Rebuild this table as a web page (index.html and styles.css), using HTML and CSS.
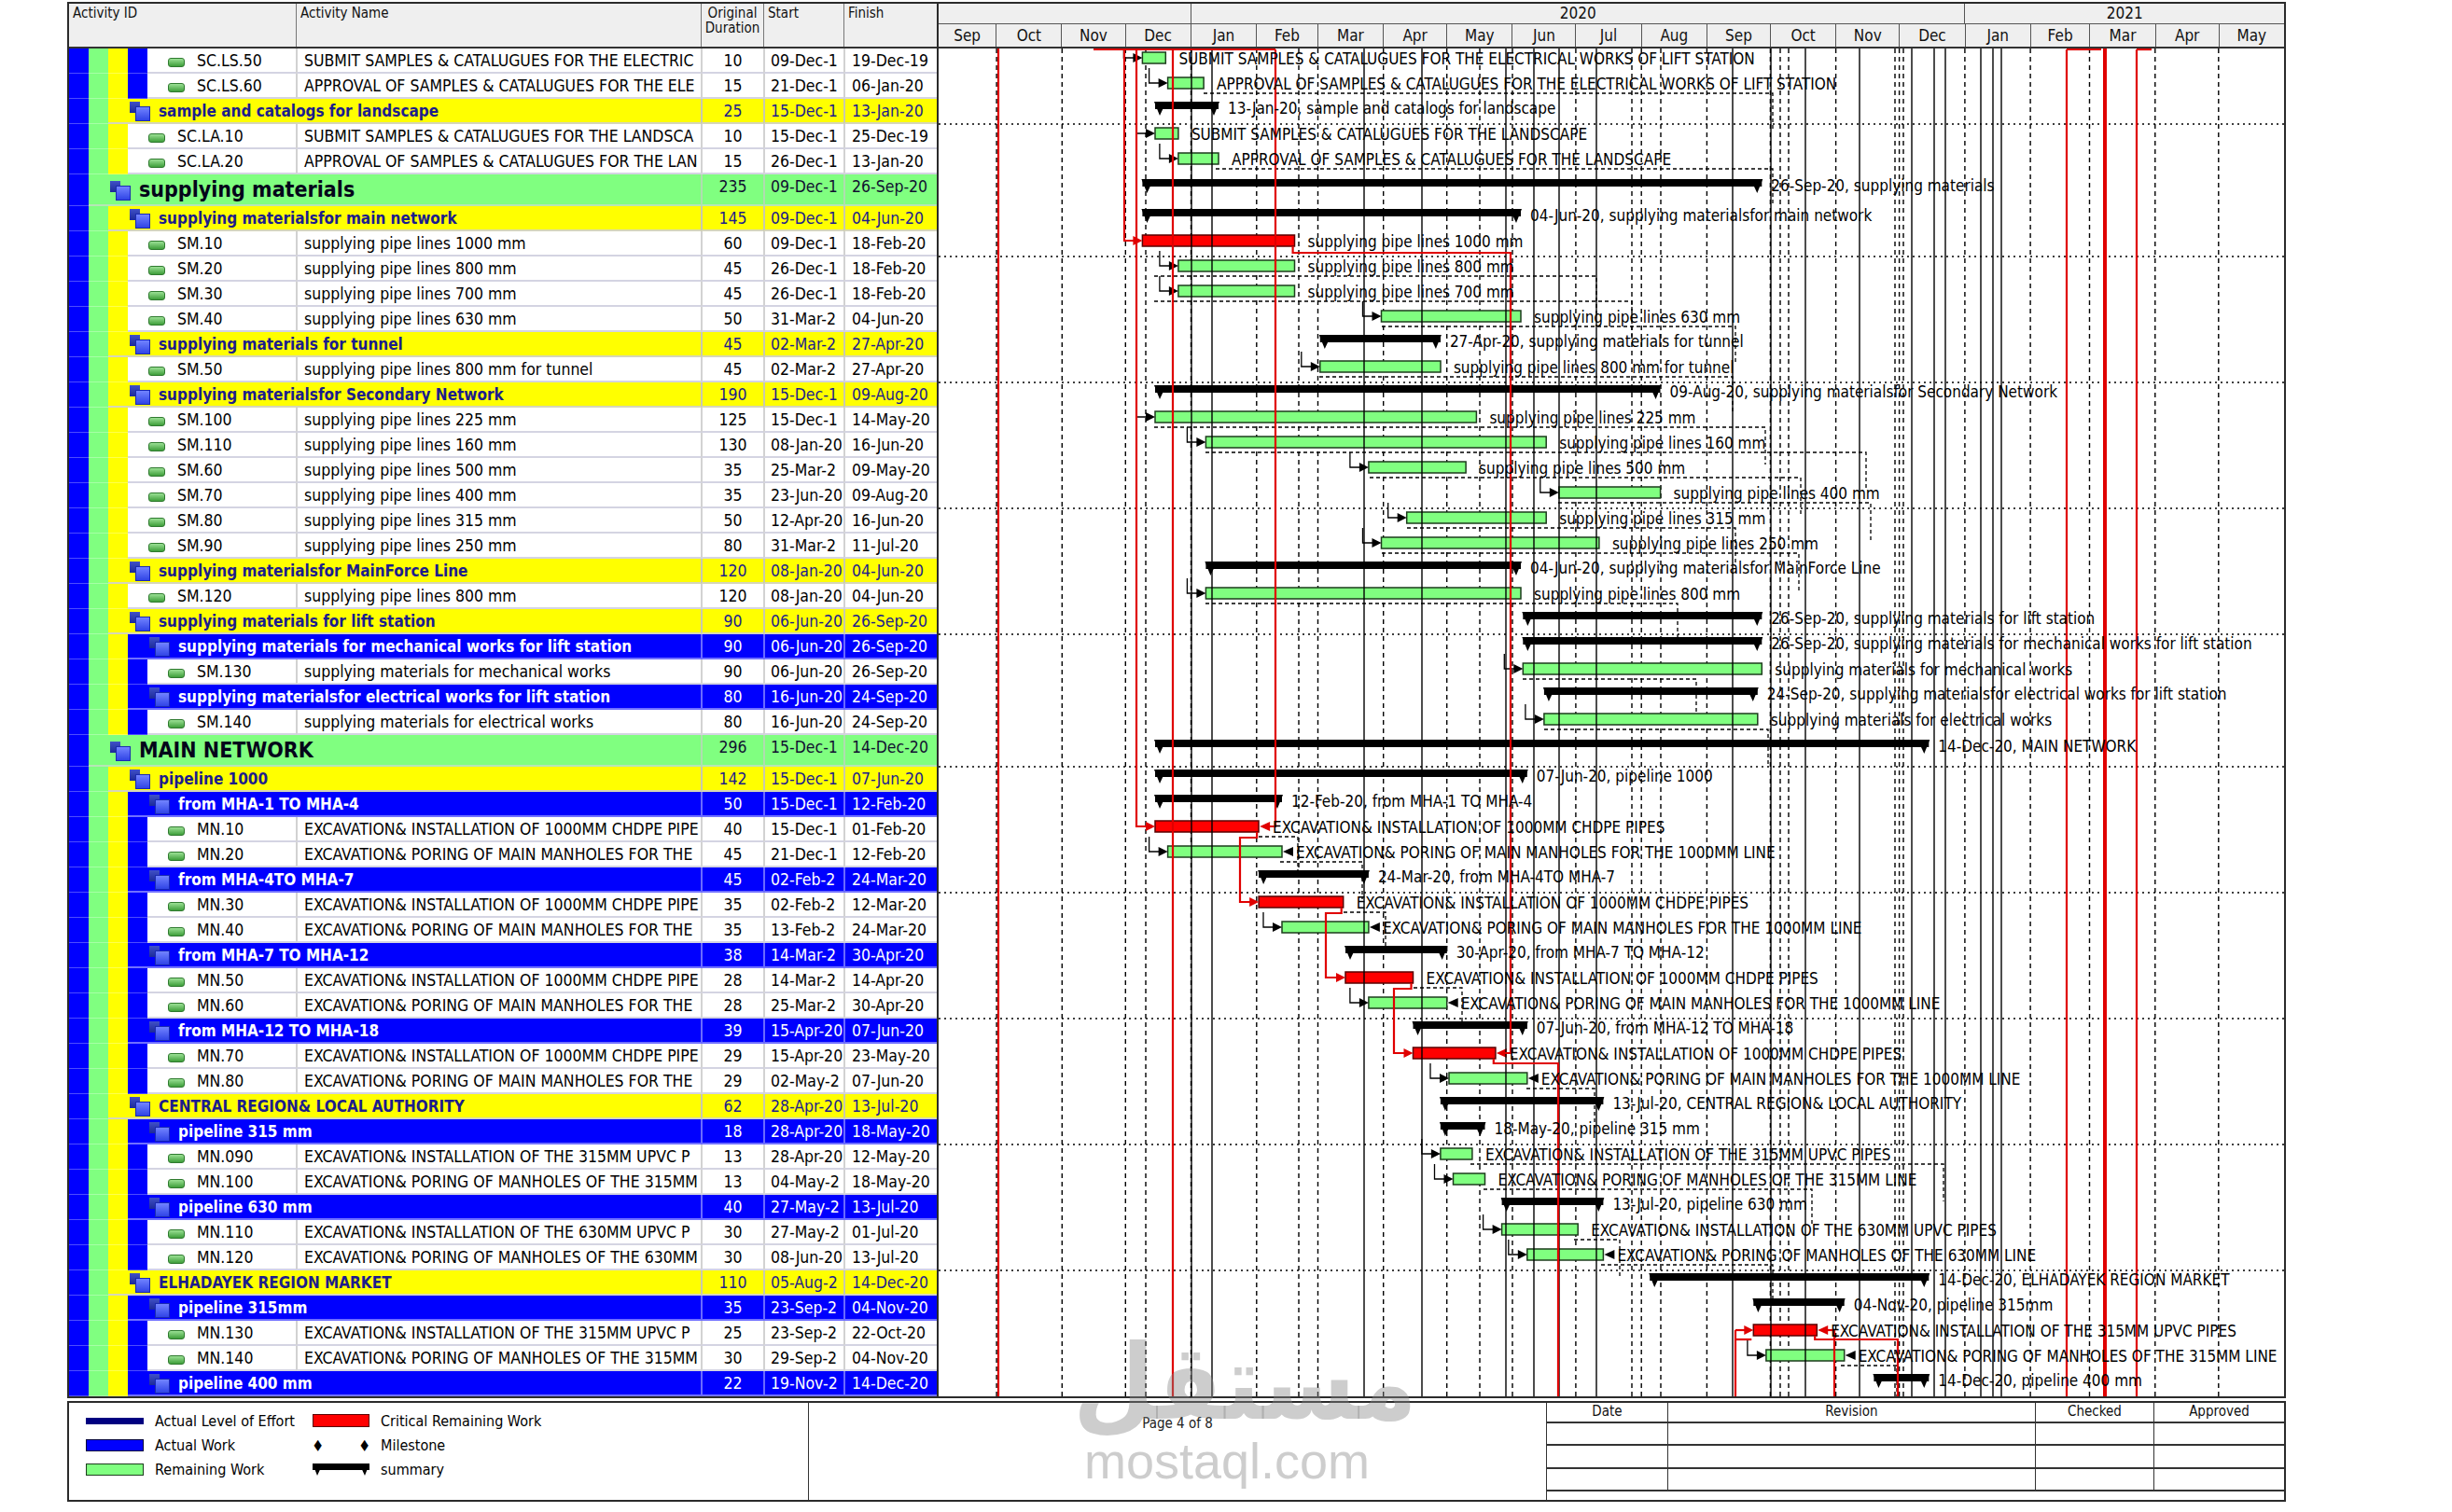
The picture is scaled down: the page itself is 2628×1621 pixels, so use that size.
FILE: index.html
```html
<!DOCTYPE html>
<html>
<head>
<meta charset="utf-8">
<title>Schedule - Page 4 of 8</title>
<link rel="stylesheet" href="styles.css">
</head>
<body>
<div class="sheet">
  <div class="chart">
    <div class="table">
      <div class="thead">
        <div class="th th-id">Activity ID</div>
        <div class="th th-name">Activity Name</div>
        <div class="th th-dur">Original<br>Duration</div>
        <div class="th th-start">Start</div>
        <div class="th th-fin">Finish</div>
      </div>
      <div class="tbody" id="tbody"></div>
    </div>
    <div class="gantt">
      <div class="ghead">
        <div class="years">
          <div class="yr" style="flex-grow:119.4"></div>
          <div class="yr" style="flex-grow:366">2020</div>
          <div class="yr" style="flex-grow:151">2021</div>
        </div>
        <div class="months">
          <div class="mo" style="flex-grow:27.4">Sep</div>
          <div class="mo" style="flex-grow:31">Oct</div>
          <div class="mo" style="flex-grow:30">Nov</div>
          <div class="mo" style="flex-grow:31">Dec</div>
          <div class="mo" style="flex-grow:31">Jan</div>
          <div class="mo" style="flex-grow:29">Feb</div>
          <div class="mo" style="flex-grow:31">Mar</div>
          <div class="mo" style="flex-grow:30">Apr</div>
          <div class="mo" style="flex-grow:31">May</div>
          <div class="mo" style="flex-grow:30">Jun</div>
          <div class="mo" style="flex-grow:31">Jul</div>
          <div class="mo" style="flex-grow:31">Aug</div>
          <div class="mo" style="flex-grow:30">Sep</div>
          <div class="mo" style="flex-grow:31">Oct</div>
          <div class="mo" style="flex-grow:30">Nov</div>
          <div class="mo" style="flex-grow:31">Dec</div>
          <div class="mo" style="flex-grow:31">Jan</div>
          <div class="mo" style="flex-grow:28">Feb</div>
          <div class="mo" style="flex-grow:31">Mar</div>
          <div class="mo" style="flex-grow:30">Apr</div>
          <div class="mo" style="flex-grow:31">May</div>
        </div>
      </div>
      <div class="gbody" id="gbody"><svg class="gsvg" id="gsvg" xmlns="http://www.w3.org/2000/svg"></svg></div>
    </div>
  </div>

  <div class="legend">
    <div class="lg-keys">
      <div class="key"><span class="sw sw-loe"></span><span class="kt">Actual Level of Effort</span></div>
      <div class="key"><span class="sw sw-crit"></span><span class="kt">Critical Remaining Work</span></div>
      <div class="key"><span class="sw sw-act"></span><span class="kt">Actual Work</span></div>
      <div class="key"><span class="sw sw-ms"><span class="dia">&#9670;</span><span class="dia">&#9670;</span></span><span class="kt">Milestone</span></div>
      <div class="key"><span class="sw sw-rem"></span><span class="kt">Remaining Work</span></div>
      <div class="key"><span class="sw sw-sum"><svg width="61" height="16" viewBox="0 0 61 16"><rect x="0" y="2" width="61" height="7" fill="#000"/><polygon points="0,2 11,2 5,15" fill="#000"/><polygon points="50,2 61,2 56,15" fill="#000"/></svg></span><span class="kt">summary</span></div>
    </div>
    <div class="lg-page">Page 4 of 8</div>
    <div class="lg-rev">
      <div class="rv rh">Date</div><div class="rv rh">Revision</div><div class="rv rh">Checked</div><div class="rv rh">Approved</div>
      <div class="rv"></div><div class="rv"></div><div class="rv"></div><div class="rv"></div>
      <div class="rv"></div><div class="rv"></div><div class="rv"></div><div class="rv"></div>
      <div class="rv"></div><div class="rv"></div><div class="rv"></div><div class="rv"></div>
      <div class="rv rlast"></div>
    </div>
  </div>
</div>

<div class="watermark">
  <div class="wm-ar">مستقل</div>
  <div class="wm-en">mostaql.com</div>
</div>

<script src="script.js"></script>
</body>
</html>
```

FILE: styles.css
```css
* { box-sizing: border-box; }
html, body { margin: 0; padding: 0; background: #fff; }
body {
  width: 2628px;
  height: 1621px;
  overflow: hidden;
  position: relative;
  font-family: "Liberation Sans Narrow", "Arial Narrow", "DejaVu Sans Condensed", "Liberation Sans", sans-serif;
  font-stretch: condensed;
  color: #000;
}

.sheet { margin-left: 72px; padding-top: 2px; width: 2378px; }

.chart { display: flex; border: 2px solid #2b2b2b; }

/* ---------- table ---------- */
.table { width: 932px; flex: none; border-right: 2px solid #2b2b2b; }
.thead { display: flex; height: 48px; background: #efefef; border-bottom: 2px solid #333; }
.th { font-size: 15px; line-height: 16px; padding: 2px 4px; border-left: 1.5px solid #777; color: #111; }
.th-id { width: 243px; border-left: none; }
.th-name { width: 434px; }
.th-dur { width: 67px; text-align: center; padding: 2px 0; }
.th-start { width: 86px; }
.th-fin { width: 100px; }

.row { display: flex; height: 27px; }
.row.r-g { height: 34px; }
.stripe { flex: none; width: 21px; border-bottom: 1px solid rgba(255,255,255,0.3); }
.s-b { background: #0000fe; }
.s-g { background: #80ff80; }
.s-y { background: #ffff00; }

.cell {
  display: flex; align-items: center; white-space: nowrap; overflow: hidden;
  font-size: 17.5px; border-bottom: 2px solid #d4d4e2;
}
.c-id { flex: 1 1 0; min-width: 0; padding-left: 22px; }
.c-wbs { flex: 1 1 0; min-width: 0; padding-left: 23px; font-weight: bold; font-size: 17px; }
.c-name { flex: none; width: 434px; padding-left: 7px; border-left: 2px solid #d2d2d2; }
.c-dur { flex: none; width: 67px; justify-content: center; border-left: 2px solid #d2d2d2; }
.c-start { flex: none; width: 86px; padding-left: 6px; border-left: 2px solid #d2d2d2; }
.c-fin { flex: none; width: 100px; padding-left: 7px; border-left: 2px solid #d2d2d2; }

.r-a .cell { background: #fff; color: #000; }
.r-y .cell { background: #ffff00; color: #1c1c8c; border-bottom-color: #d6d6b8; }
.r-y .cell.c-dur, .r-y .cell.c-start, .r-y .cell.c-fin { border-left-color: #c8c8b0; }
.r-b .cell { background: #0000fe; color: #fff; border-bottom-color: #7070ff; }
.r-b .cell.c-dur, .r-b .cell.c-start, .r-b .cell.c-fin { border-left-color: #6a6aff; }
.r-g .cell { background: #80ff80; color: #101030; border-bottom-color: #b6e6b6; }
.r-g .cell.c-dur, .r-g .cell.c-start, .r-g .cell.c-fin { border-left-color: #b0dcb0; align-items: flex-start; padding-top: 3px; }
.r-g .c-wbs { font-size: 23px; color: #05051a; }

.act-icon {
  flex: none; width: 18px; height: 10px; margin: 4px 13px 0 0;
  border-radius: 3px; border: 1px solid #2f7a2f;
  background: linear-gradient(#9ae094, #3e9e3a);
}
.wbs-icon { flex: none; position: relative; width: 21px; height: 19px; margin-right: 10px; }
.wbs-icon::before {
  content: ""; position: absolute; left: 0; top: 0; width: 11px; height: 12px;
  background: linear-gradient(#4050c8, #1c2a98);
}
.wbs-icon::after {
  content: ""; position: absolute; left: 6px; top: 5px; width: 14px; height: 14px;
  background: linear-gradient(#7284ff, #3044e6); border: 1px solid #1a2ab0;
}

/* ---------- gantt ---------- */
.gantt { flex: 1; min-width: 0; display: flex; flex-direction: column; }
.ghead { height: 48px; display: flex; flex-direction: column; background: #efefef; border-bottom: 2px solid #333; }
.years { display: flex; height: 22px; border-bottom: 1.5px solid #555; }
.yr { flex-basis: 0; flex-shrink: 1; text-align: center; font-size: 17px; line-height: 21px; border-left: 1.5px solid #555; color: #111; }
.yr:first-child { border-left: none; }
.months { display: flex; flex: 1; }
.mo { flex-basis: 0; flex-shrink: 1; display: flex; align-items: center; justify-content: center; font-size: 17px; border-left: 1.5px solid #555; color: #111; }
.mo:first-child { border-left: none; }
.gbody { flex: 1; position: relative; overflow: hidden; }
.gsvg { position: absolute; left: 0; top: 0; width: 100%; height: 100%; }

.gsvg .ml { stroke: #000; stroke-width: 1.4; stroke-dasharray: 5 4; }
.gsvg .hd { stroke: #000; stroke-width: 1.5; stroke-dasharray: 2 4; }
.gsvg .rd { stroke: #000; stroke-width: 1.3; stroke-dasharray: 4 3; fill: none; }
.gsvg .sl { stroke: #000; stroke-width: 1.4; }
.gsvg .cn { stroke: #000; stroke-width: 1.3; fill: none; }
.gsvg .rl { stroke: #e00000; stroke-width: 2.2; fill: none; }
.gsvg .rl.thick { stroke-width: 4; }
.gsvg .bg { fill: #80ff80; stroke: #1d3d1d; stroke-width: 1.5; }
.gsvg .bc { fill: #ff0000; stroke: #5a0000; stroke-width: 1.5; }
.gsvg .gl { font-family: "Liberation Sans Narrow", "Arial Narrow", "DejaVu Sans Condensed", sans-serif; font-stretch: condensed; font-size: 17px; fill: #000; dominant-baseline: central; }

/* ---------- legend ---------- */
.legend { display: flex; margin-top: 3px; height: 108px; border: 2px solid #2b2b2b; }
.lg-keys {
  width: 793px; flex: none; border-right: 1.5px solid #333;
  display: grid; grid-template-columns: 243px auto; grid-auto-rows: 26px;
  padding: 6px 0 0 18px; align-content: start;
}
.key { display: flex; align-items: center; gap: 12px; font-size: 16px; color: #000; }
.sw { flex: none; width: 62px; display: flex; align-items: center; }
.sw-loe { height: 7px; background: #000080; }
.sw-act { height: 13px; background: #0000fe; border: 1px solid #00003a; }
.sw-rem { height: 13px; background: #80ff80; border: 1.5px solid #1d3d1d; }
.sw-crit { width: 61px; height: 14px; background: #ff0000; border: 1.5px solid #5a0000; }
.sw-ms { width: 61px; height: 16px; justify-content: space-between; }
.dia { font-family: "DejaVu Sans", sans-serif; font-size: 16px; line-height: 16px; transform: scaleX(0.75); }
.sw-sum { width: 61px; height: 16px; }
.lg-page { width: 791px; flex: none; border-right: 1.5px solid #333; text-align: center; font-size: 15px; padding-top: 13px; color: #222; }
.lg-rev {
  flex: 1; display: grid;
  grid-template-columns: 129px 394px 127px 1fr;
  grid-template-rows: 22px 24px 25px 24px 1fr;
}
.rv { border-bottom: 2px solid #333; border-left: 1.5px solid #333; }
.rv:nth-child(4n+1) { border-left: none; }
.rh { font-size: 15px; text-align: center; line-height: 19px; color: #111; }
.rv.rlast { grid-column: 1 / 5; border: none; }

/* ---------- watermark ---------- */
.watermark {
  position: absolute; left: 1150px; top: 1420px; width: 330px;
  text-align: center; color: rgba(135,135,135,0.42); pointer-events: none;
}
.wm-ar { font-family: "DejaVu Sans", sans-serif; font-weight: bold; font-size: 112px; line-height: 124px; }
.wm-en { font-family: "Liberation Sans", sans-serif; font-size: 54px; line-height: 56px; margin-top: -6px; }
```

FILE: script.js
```js
(function () {
  /* type, stripes, id, gantt label / name, dur, start, finish, iso start, iso finish, flags, table name (as shown, truncated) */
  var R = [
    ['a','bgyb','SC.LS.50','SUBMIT SAMPLES & CATALUGUES FOR THE ELECTRICAL WORKS OF LIFT STATION',10,'09-Dec-1','19-Dec-19','2019-12-09','2019-12-19','','SUBMIT SAMPLES & CATALUGUES FOR THE ELECTRIC'],
    ['a','bgyb','SC.LS.60','APPROVAL OF SAMPLES & CATALUGUES FOR THE ELECTRICAL WORKS OF LIFT STATION',15,'21-Dec-1','06-Jan-20','2019-12-21','2020-01-06','','APPROVAL OF SAMPLES & CATALUGUES FOR THE ELE'],
    ['y','bg','','sample and catalogs for landscape',25,'15-Dec-1','13-Jan-20','2019-12-15','2020-01-13',''],
    ['a','bgy','SC.LA.10','SUBMIT SAMPLES & CATALUGUES FOR THE LANDSCAPE',10,'15-Dec-1','25-Dec-19','2019-12-15','2019-12-25','','SUBMIT SAMPLES & CATALUGUES FOR THE LANDSCA'],
    ['a','bgy','SC.LA.20','APPROVAL OF SAMPLES & CATALUGUES FOR THE LANDSCAPE',15,'26-Dec-1','13-Jan-20','2019-12-26','2020-01-13','','APPROVAL OF SAMPLES & CATALUGUES FOR THE LAN'],
    ['g','b','','supplying materials',235,'09-Dec-1','26-Sep-20','2019-12-09','2020-09-26',''],
    ['y','bg','','supplying materialsfor main network',145,'09-Dec-1','04-Jun-20','2019-12-09','2020-06-04',''],
    ['a','bgy','SM.10','supplying pipe lines 1000 mm',60,'09-Dec-1','18-Feb-20','2019-12-09','2020-02-18','c'],
    ['a','bgy','SM.20','supplying pipe lines 800 mm',45,'26-Dec-1','18-Feb-20','2019-12-26','2020-02-18',''],
    ['a','bgy','SM.30','supplying pipe lines 700 mm',45,'26-Dec-1','18-Feb-20','2019-12-26','2020-02-18',''],
    ['a','bgy','SM.40','supplying pipe lines 630 mm',50,'31-Mar-2','04-Jun-20','2020-03-31','2020-06-04',''],
    ['y','bg','','supplying materials for tunnel',45,'02-Mar-2','27-Apr-20','2020-03-02','2020-04-27',''],
    ['a','bgy','SM.50','supplying pipe lines 800 mm for tunnel',45,'02-Mar-2','27-Apr-20','2020-03-02','2020-04-27',''],
    ['y','bg','','supplying materialsfor Secondary Network',190,'15-Dec-1','09-Aug-20','2019-12-15','2020-08-09',''],
    ['a','bgy','SM.100','supplying pipe lines 225 mm',125,'15-Dec-1','14-May-20','2019-12-15','2020-05-14',''],
    ['a','bgy','SM.110','supplying pipe lines 160 mm',130,'08-Jan-20','16-Jun-20','2020-01-08','2020-06-16',''],
    ['a','bgy','SM.60','supplying pipe lines 500 mm',35,'25-Mar-2','09-May-20','2020-03-25','2020-05-09',''],
    ['a','bgy','SM.70','supplying pipe lines 400 mm',35,'23-Jun-20','09-Aug-20','2020-06-23','2020-08-09',''],
    ['a','bgy','SM.80','supplying pipe lines 315 mm',50,'12-Apr-20','16-Jun-20','2020-04-12','2020-06-16',''],
    ['a','bgy','SM.90','supplying pipe lines 250 mm',80,'31-Mar-2','11-Jul-20','2020-03-31','2020-07-11',''],
    ['y','bg','','supplying materialsfor MainForce Line',120,'08-Jan-20','04-Jun-20','2020-01-08','2020-06-04',''],
    ['a','bgy','SM.120','supplying pipe lines 800 mm',120,'08-Jan-20','04-Jun-20','2020-01-08','2020-06-04',''],
    ['y','bg','','supplying materials for lift station',90,'06-Jun-20','26-Sep-20','2020-06-06','2020-09-26',''],
    ['b','bgy','','supplying materials for mechanical works for lift station',90,'06-Jun-20','26-Sep-20','2020-06-06','2020-09-26',''],
    ['a','bgyb','SM.130','supplying materials for mechanical works',90,'06-Jun-20','26-Sep-20','2020-06-06','2020-09-26',''],
    ['b','bgy','','supplying materialsfor electrical works for lift station',80,'16-Jun-20','24-Sep-20','2020-06-16','2020-09-24',''],
    ['a','bgyb','SM.140','supplying materials for electrical works',80,'16-Jun-20','24-Sep-20','2020-06-16','2020-09-24',''],
    ['g','b','','MAIN NETWORK',296,'15-Dec-1','14-Dec-20','2019-12-15','2020-12-14',''],
    ['y','bg','','pipeline 1000',142,'15-Dec-1','07-Jun-20','2019-12-15','2020-06-07',''],
    ['b','bgy','','from MHA-1 TO MHA-4',50,'15-Dec-1','12-Feb-20','2019-12-15','2020-02-12',''],
    ['a','bgyb','MN.10','EXCAVATION& INSTALLATION OF 1000MM CHDPE PIPES',40,'15-Dec-1','01-Feb-20','2019-12-15','2020-02-01','ce','EXCAVATION& INSTALLATION OF 1000MM CHDPE PIPE'],
    ['a','bgyb','MN.20','EXCAVATION& PORING OF MAIN MANHOLES FOR THE 1000MM LINE',45,'21-Dec-1','12-Feb-20','2019-12-21','2020-02-12','e','EXCAVATION& PORING OF MAIN MANHOLES FOR THE'],
    ['b','bgy','','from MHA-4TO MHA-7',45,'02-Feb-2','24-Mar-20','2020-02-02','2020-03-24',''],
    ['a','bgyb','MN.30','EXCAVATION& INSTALLATION OF 1000MM CHDPE PIPES',35,'02-Feb-2','12-Mar-20','2020-02-02','2020-03-12','c','EXCAVATION& INSTALLATION OF 1000MM CHDPE PIPE'],
    ['a','bgyb','MN.40','EXCAVATION& PORING OF MAIN MANHOLES FOR THE 1000MM LINE',35,'13-Feb-2','24-Mar-20','2020-02-13','2020-03-24','e','EXCAVATION& PORING OF MAIN MANHOLES FOR THE'],
    ['b','bgy','','from MHA-7 TO MHA-12',38,'14-Mar-2','30-Apr-20','2020-03-14','2020-04-30',''],
    ['a','bgyb','MN.50','EXCAVATION& INSTALLATION OF 1000MM CHDPE PIPES',28,'14-Mar-2','14-Apr-20','2020-03-14','2020-04-14','c','EXCAVATION& INSTALLATION OF 1000MM CHDPE PIPE'],
    ['a','bgyb','MN.60','EXCAVATION& PORING OF MAIN MANHOLES FOR THE 1000MM LINE',28,'25-Mar-2','30-Apr-20','2020-03-25','2020-04-30','e','EXCAVATION& PORING OF MAIN MANHOLES FOR THE'],
    ['b','bgy','','from MHA-12 TO MHA-18',39,'15-Apr-20','07-Jun-20','2020-04-15','2020-06-07',''],
    ['a','bgyb','MN.70','EXCAVATION& INSTALLATION OF 1000MM CHDPE PIPES',29,'15-Apr-20','23-May-20','2020-04-15','2020-05-23','ce','EXCAVATION& INSTALLATION OF 1000MM CHDPE PIPE'],
    ['a','bgyb','MN.80','EXCAVATION& PORING OF MAIN MANHOLES FOR THE 1000MM LINE',29,'02-May-2','07-Jun-20','2020-05-02','2020-06-07','e','EXCAVATION& PORING OF MAIN MANHOLES FOR THE'],
    ['y','bg','','CENTRAL REGION& LOCAL AUTHORITY',62,'28-Apr-20','13-Jul-20','2020-04-28','2020-07-13',''],
    ['b','bgy','','pipeline 315 mm',18,'28-Apr-20','18-May-20','2020-04-28','2020-05-18',''],
    ['a','bgyb','MN.090','EXCAVATION& INSTALLATION OF THE 315MM UPVC PIPES',13,'28-Apr-20','12-May-20','2020-04-28','2020-05-12','','EXCAVATION& INSTALLATION OF THE 315MM UPVC P'],
    ['a','bgyb','MN.100','EXCAVATION& PORING OF MANHOLES OF THE 315MM  LINE',13,'04-May-2','18-May-20','2020-05-04','2020-05-18','','EXCAVATION& PORING OF MANHOLES OF THE 315MM'],
    ['b','bgy','','pipeline 630 mm',40,'27-May-2','13-Jul-20','2020-05-27','2020-07-13',''],
    ['a','bgyb','MN.110','EXCAVATION& INSTALLATION OF THE 630MM UPVC PIPES',30,'27-May-2','01-Jul-20','2020-05-27','2020-07-01','','EXCAVATION& INSTALLATION OF THE 630MM UPVC P'],
    ['a','bgyb','MN.120','EXCAVATION& PORING OF MANHOLES OF THE 630MM  LINE',30,'08-Jun-20','13-Jul-20','2020-06-08','2020-07-13','e','EXCAVATION& PORING OF MANHOLES OF THE 630MM'],
    ['y','bg','','ELHADAYEK REGION MARKET',110,'05-Aug-2','14-Dec-20','2020-08-05','2020-12-14',''],
    ['b','bgy','','pipeline 315mm',35,'23-Sep-2','04-Nov-20','2020-09-23','2020-11-04',''],
    ['a','bgyb','MN.130','EXCAVATION& INSTALLATION OF THE 315MM UPVC PIPES',25,'23-Sep-2','22-Oct-20','2020-09-23','2020-10-22','ce','EXCAVATION& INSTALLATION OF THE 315MM UPVC P'],
    ['a','bgyb','MN.140','EXCAVATION& PORING OF MANHOLES OF THE 315MM  LINE',30,'29-Sep-2','04-Nov-20','2020-09-29','2020-11-04','e','EXCAVATION& PORING OF MANHOLES OF THE 315MM'],
    ['b','bgy','','pipeline 400 mm',22,'19-Nov-2','14-Dec-20','2020-11-19','2020-12-14','']
  ];

  function el(tag, cls, txt) {
    var e = document.createElement(tag);
    if (cls) e.className = cls;
    if (txt != null) e.textContent = txt;
    return e;
  }

  /* ---- table ---- */
  var tbody = document.getElementById('tbody');
  R.forEach(function (r) {
    var row = el('div', 'row r-' + r[0]);
    for (var i = 0; i < r[1].length; i++) row.appendChild(el('div', 'stripe s-' + r[1][i]));
    if (r[0] === 'a') {
      var idc = el('div', 'cell c-id');
      idc.appendChild(el('span', 'act-icon'));
      idc.appendChild(el('span', 'txt', r[2]));
      row.appendChild(idc);
      row.appendChild(el('div', 'cell c-name', r[10] || r[3]));
    } else {
      var w = el('div', 'cell c-wbs');
      w.appendChild(el('span', 'wbs-icon'));
      w.appendChild(el('span', 'txt', r[3]));
      row.appendChild(w);
    }
    row.appendChild(el('div', 'cell c-dur', String(r[4])));
    row.appendChild(el('div', 'cell c-start', r[5]));
    row.appendChild(el('div', 'cell c-fin', r[6]));
    tbody.appendChild(row);
  });

  /* ---- gantt ---- */
  var gb = document.getElementById('gbody');
  var gr = gb.getBoundingClientRect();
  var W = gr.width, H = gr.height, L = gr.left;
  var k = W / 636.4;
  var O = Date.UTC(2019, 9, 1);
  function xd(iso, end) {
    var p = iso.split('-').map(Number);
    return (27.4 + (Date.UTC(p[0], p[1] - 1, p[2]) - O) / 864e5 + (end ? 1 : 0)) * k;
  }
  function ax(x) { return x - L; }
  var rows = tbody.children;
  function T(i) { return rows[i].getBoundingClientRect().top - gr.top; }
  function C(i) { return T(i) + 10; }
  function esc(s) { return s.replace(/&/g, '&amp;').replace(/</g, '&lt;'); }
  function f(n) { return Math.round(n * 10) / 10; }

  var bg = '', mid = '', top = '', lab = '';

  // month grid
  var y = 2019, m = 9;
  while (!(y === 2021 && m === 5)) {
    var x = xd(y + '-' + (m + 1) + '-1');
    bg += '<line class="ml" x1="' + f(x) + '" y1="0" x2="' + f(x) + '" y2="' + H + '"/>';
    m++; if (m === 12) { m = 0; y++; }
  }
  // extra dashed verticals
  [1228, 1392, 1586, 1749, 1780, 1908, 1917, 2031, 2040].forEach(function (x) {
    bg += '<line class="ml" x1="' + ax(x) + '" y1="0" x2="' + ax(x) + '" y2="' + H + '"/>';
  });
  // dotted separators every 5 rows
  for (var i = 3; i < R.length; i += 5) {
    var ty = f(T(i));
    bg += '<line class="hd" x1="0" y1="' + ty + '" x2="' + W + '" y2="' + ty + '"/>';
  }
  // relationship dashed lines
  var rel = [[1,1290,1900],[4,1303,1900],[8,1237,1711],[9,1237,1749],[10,1481,1860],[12,1414,1857],
    [14,1237,1892],[15,1292,2000],[16,1468,1930],[17,1670,2005],[18,1508,1860],[19,1481,1928],
    [21,1292,1798],[24,1632,1818],[26,1655,1895],[30,1349,1391],[31,1372,1460],[33,1440,1485],
    [36,1515,1567],[40,1636,1709],[43,1576,2083],[44,1590,1942],[46,1687,1736],[47,1716,1900],[51,1973,2033]];
  rel.forEach(function (d) {
    var yy = f(T(d[0]) + 21);
    bg += '<path class="rd" d="M' + f(ax(d[1])) + ' ' + yy + 'H' + f(ax(d[2])) + 'V' + f(yy + 40) + '"/>';
  });

  // bars
  R.forEach(function (r, i) {
    var t = T(i), xs = xd(r[7]), xe = xd(r[8], 1);
    if (r[0] === 'a') {
      var crit = r[9].indexOf('c') >= 0, cy = t + 10;
      var col = crit ? '#e00000' : '#000';
      mid += '<rect class="' + (crit ? 'bc' : 'bg') + '" x="' + f(xs) + '" y="' + f(t + 4) + '" width="' + f(xe - xs) + '" height="12"/>';
      if (!crit) top += '<path class="cn" d="M' + f(xs - 20) + ' ' + f(cy - 16) + 'V' + f(cy) + 'H' + f(xs - 8) + '"/>';
      top += '<polygon fill="' + col + '" points="' + f(xs - 10) + ',' + f(cy - 5) + ' ' + f(xs) + ',' + f(cy) + ' ' + f(xs - 10) + ',' + f(cy + 5) + '"/>';
      var lx = xe + 14;
      if (r[9].indexOf('e') >= 0) {
        top += '<polygon fill="' + col + '" points="' + f(xe + 1) + ',' + f(cy) + ' ' + f(xe + 12) + ',' + f(cy - 5) + ' ' + f(xe + 12) + ',' + f(cy + 5) + '"/>';
        lx = xe + 15;
      }
      lab += '<text class="gl" x="' + f(lx) + '" y="' + f(cy + 1) + '">' + esc(r[3]) + '</text>';
    } else {
      var y0 = t + (r[0] === 'g' ? 5 : 3);
      mid += '<rect fill="#000" x="' + f(xs) + '" y="' + f(y0) + '" width="' + f(xe - xs) + '" height="8"/>';
      mid += '<polygon fill="#000" points="' + f(xs - 1) + ',' + f(y0) + ' ' + f(xs + 12) + ',' + f(y0) + ' ' + f(xs + 5) + ',' + f(y0 + 15) + '"/>';
      mid += '<polygon fill="#000" points="' + f(xe - 12) + ',' + f(y0) + ' ' + f(xe + 1) + ',' + f(y0) + ' ' + f(xe - 5) + ',' + f(y0 + 15) + '"/>';
      lab += '<text class="gl" x="' + f(xe + 10) + '" y="' + f(y0 + 7) + '">' + esc(r[6] + ', ' + r[3]) + '</text>';
    }
  });

  // solid relationship verticals
  [1277, 1299, 1462, 1524, 1614, 1644, 1671, 1711, 1857, 1898, 1935, 1993, 2049, 2073, 2085, 2123, 2136, 2145].forEach(function (x) {
    top += '<line class="sl" x1="' + ax(x) + '" y1="0" x2="' + ax(x) + '" y2="' + H + '"/>';
  });

  // critical (red) relationship lines
  var red = [
    'M' + ax(1070) + ' 0V' + H,
    'M' + ax(1172) + ' 1H' + ax(1367),
    'M' + ax(1205) + ' 1V' + f(C(7)) + 'H' + f(xd('2019-12-09') - 8),
    'M' + ax(1218) + ' 1V' + f(C(30)) + 'H' + f(xd('2019-12-15') - 8),
    'M' + ax(1257) + ' 1V' + H,
    'M' + ax(1367) + ' 1V' + f(C(30)) + 'H' + f(xd('2020-02-01', 1) + 10),
    'M' + f(xd('2020-02-18', 1) - 2) + ' ' + f(T(7) + 16) + 'V' + f(T(8) - 4) + 'H' + ax(1619) + 'V' + f(C(39)) + 'H' + f(xd('2020-05-23', 1) + 10),
    'M' + f(xd('2020-02-01', 1) - 2) + ' ' + f(T(30) + 16) + 'V' + f(T(30) + 22) + 'H' + ax(1329) + 'V' + f(C(33)) + 'H' + f(xd('2020-02-02') - 8),
    'M' + f(xd('2020-03-12', 1) - 2) + ' ' + f(T(33) + 16) + 'V' + f(T(33) + 22) + 'H' + ax(1421) + 'V' + f(C(36)) + 'H' + f(xd('2020-03-14') - 8),
    'M' + f(xd('2020-04-14', 1) - 2) + ' ' + f(T(36) + 16) + 'V' + f(T(36) + 22) + 'H' + ax(1494) + 'V' + f(C(39)) + 'H' + f(xd('2020-04-15') - 8),
    'M' + f(xd('2020-05-23', 1) - 2) + ' ' + f(T(39) + 16) + 'V' + f(T(39) + 21) + 'H' + ax(1670) + 'V' + H,
    'M' + ax(1860) + ' ' + f(C(50)) + 'V' + H,
    'M' + ax(1860) + ' ' + f(C(50)) + 'H' + f(xd('2020-09-23') - 8),
    'M' + ax(1860) + ' ' + f(T(50) + 20) + 'H' + f(xd('2020-09-23') - 2),
    'M' + ax(1966) + ' ' + f(C(50)) + 'V' + H,
    'M' + ax(1966) + ' ' + f(C(50)) + 'H' + f(xd('2020-10-22', 1) + 10),
    'M' + f(xd('2020-10-22', 1) - 2) + ' ' + f(T(50) + 16) + 'V' + f(T(50) + 20) + 'H' + ax(2034) + 'V' + H,
    'M' + ax(2215) + ' 1V' + H,
    'M' + ax(2215) + ' 1H' + ax(2252),
    'M' + ax(2290) + ' 1V' + H,
    'M' + ax(2290) + ' 1H' + ax(2306)
  ];
  red.forEach(function (d) { top += '<path class="rl" d="' + d + '"/>'; });
  top += '<path class="rl thick" d="M' + ax(2256) + ' 0V' + H + '"/>';

  document.getElementById('gsvg').innerHTML = bg + mid + top + lab;
})();
```
